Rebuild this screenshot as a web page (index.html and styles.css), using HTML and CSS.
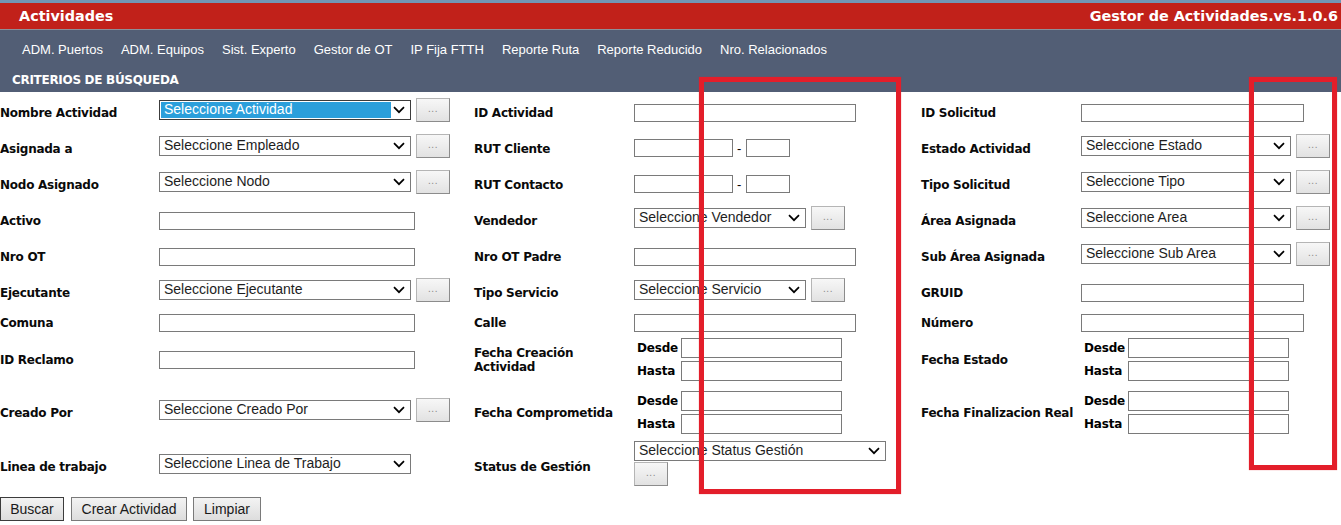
FILE: index.html
```html
<!DOCTYPE html>
<html lang="es">
<head>
<meta charset="utf-8">
<title>Actividades</title>
<link rel="stylesheet" href="styles.css">
</head>
<body>
<div class="topline"></div>
<header class="titlebar">
  <span class="title">Actividades</span>
  <span class="version">Gestor de Actividades.vs.1.0.6</span>
</header>
<div class="graybar">
  <nav class="menu">
    <a>ADM. Puertos</a>
    <a>ADM. Equipos</a>
    <a>Sist. Experto</a>
    <a>Gestor de OT</a>
    <a>IP Fija FTTH</a>
    <a>Reporte Ruta</a>
    <a>Reporte Reducido</a>
    <a>Nro. Relacionados</a>
  </nav>
  <div class="section">CRITERIOS DE BÚSQUEDA</div>
</div>

<form class="grid">
  <!-- row 1 -->
  <label class="lbl">Nombre Actividad</label>
  <div class="pick"><select class="sel w252 focused"><option>Seleccione Actividad</option></select><button type="button" class="dots">...</button></div>
  <label class="lbl">ID Actividad</label>
  <div><input class="txt w222" type="text"></div>
  <label class="lbl">ID Solicitud</label>
  <div><input class="txt w223" type="text"></div>

  <!-- row 2 -->
  <label class="lbl">Asignada a</label>
  <div class="pick"><select class="sel w252"><option>Seleccione Empleado</option></select><button type="button" class="dots">...</button></div>
  <label class="lbl">RUT Cliente</label>
  <div class="rut"><input class="txt w99" type="text"><span class="dash">-</span><input class="txt w44" type="text"></div>
  <label class="lbl">Estado Actividad</label>
  <div class="pick"><select class="sel w210"><option>Seleccione Estado</option></select><button type="button" class="dots">...</button></div>

  <!-- row 3 -->
  <label class="lbl">Nodo Asignado</label>
  <div class="pick"><select class="sel w252"><option>Seleccione Nodo</option></select><button type="button" class="dots">...</button></div>
  <label class="lbl">RUT Contacto</label>
  <div class="rut"><input class="txt w99" type="text"><span class="dash">-</span><input class="txt w44" type="text"></div>
  <label class="lbl">Tipo Solicitud</label>
  <div class="pick"><select class="sel w210"><option>Seleccione Tipo</option></select><button type="button" class="dots">...</button></div>

  <!-- row 4 -->
  <label class="lbl">Activo</label>
  <div><input class="txt w256" type="text"></div>
  <label class="lbl">Vendedor</label>
  <div class="pick"><select class="sel w172"><option>Seleccione Vendedor</option></select><button type="button" class="dots">...</button></div>
  <label class="lbl">Área Asignada</label>
  <div class="pick"><select class="sel w210"><option>Seleccione Area</option></select><button type="button" class="dots">...</button></div>

  <!-- row 5 -->
  <label class="lbl">Nro OT</label>
  <div><input class="txt w256" type="text"></div>
  <label class="lbl">Nro OT Padre</label>
  <div><input class="txt w222" type="text"></div>
  <label class="lbl">Sub Área Asignada</label>
  <div class="pick"><select class="sel w210"><option>Seleccione Sub Area</option></select><button type="button" class="dots">...</button></div>

  <!-- row 6 -->
  <label class="lbl">Ejecutante</label>
  <div class="pick"><select class="sel w252"><option>Seleccione Ejecutante</option></select><button type="button" class="dots">...</button></div>
  <label class="lbl">Tipo Servicio</label>
  <div class="pick"><select class="sel w172"><option>Seleccione Servicio</option></select><button type="button" class="dots">...</button></div>
  <label class="lbl">GRUID</label>
  <div><input class="txt w223" type="text"></div>

  <!-- row 7 -->
  <label class="lbl">Comuna</label>
  <div><input class="txt w256" type="text"></div>
  <label class="lbl">Calle</label>
  <div><input class="txt w222" type="text"></div>
  <label class="lbl">Número</label>
  <div><input class="txt w223" type="text"></div>

  <!-- row 8 -->
  <label class="lbl">ID Reclamo</label>
  <div><input class="txt w256" type="text"></div>
  <label class="lbl">Fecha Creación<br>Actividad</label>
  <div class="range">
    <span class="rlbl">Desde</span><input class="txt dt" type="text">
    <span class="rlbl">Hasta</span><input class="txt dt" type="text">
  </div>
  <label class="lbl">Fecha Estado</label>
  <div class="range">
    <span class="rlbl">Desde</span><input class="txt dt" type="text">
    <span class="rlbl">Hasta</span><input class="txt dt" type="text">
  </div>

  <!-- row 9 -->
  <label class="lbl">Creado Por</label>
  <div class="pick"><select class="sel w252"><option>Seleccione Creado Por</option></select><button type="button" class="dots">...</button></div>
  <label class="lbl">Fecha Comprometida</label>
  <div class="range">
    <span class="rlbl">Desde</span><input class="txt dt" type="text">
    <span class="rlbl">Hasta</span><input class="txt dt" type="text">
  </div>
  <label class="lbl">Fecha Finalizacion Real</label>
  <div class="range">
    <span class="rlbl">Desde</span><input class="txt dt" type="text">
    <span class="rlbl">Hasta</span><input class="txt dt" type="text">
  </div>

  <!-- row 10 -->
  <label class="lbl">Linea de trabajo</label>
  <div class="pick"><select class="sel w252"><option>Seleccione Linea de Trabajo</option></select></div>
  <label class="lbl">Status de Gestión</label>
  <div class="stack"><select class="sel w252"><option>Seleccione Status Gestión</option></select><button type="button" class="dots">...</button></div>
  <div></div>
  <div></div>
</form>

<div class="actions">
  <button type="button" class="btn btn-main">Buscar</button>
  <button type="button" class="btn btn-create">Crear Actividad</button>
  <button type="button" class="btn btn-clear">Limpiar</button>
</div>

<div class="mark mark-a"></div>
<div class="mark mark-b"></div>
</body>
</html>
```

FILE: styles.css
```css
html, body {
  margin: 0;
  padding: 0;
  background: #ffffff;
}

body {
  position: relative;
  width: 1341px;
  height: 525px;
  overflow: hidden;
  font-family: "DejaVu Sans", Verdana, sans-serif;
  color: #000;
}

.topline {
  height: 3px;
  background: #7196b5;
}

.titlebar {
  height: 26px;
  background: #c1211a;
  border-bottom: 1px solid #8d8f98;
  display: flex;
  align-items: center;
  justify-content: space-between;
  padding: 0 3px 0 19px;
  color: #fff;
  font-family: "DejaVu Sans", Verdana, sans-serif;
  font-weight: bold;
  font-size: 14.4px;
}

.graybar {
  background: #525e75;
  height: 62px;
}

.menu {
  height: 37px;
  display: flex;
  align-items: center;
  padding-left: 13px;
}

.menu a {
  color: #fff;
  font-family: "Liberation Sans", Arial, sans-serif;
  font-size: 13px;
  padding: 1px 9px 0;
}

.section {
  height: 25px;
  display: flex;
  align-items: center;
  padding-left: 12px;
  color: #fff;
  font-weight: bold;
  font-size: 12px;
  letter-spacing: -0.3px;
}

.grid {
  margin: 0;
  padding-top: 2px;
  display: grid;
  grid-template-columns: 159px 315px 160px 287px 160px 1fr;
  grid-template-rows: 36px 36px 36px 36px 36px 36px 24px 50px 56px 52px;
  align-items: center;
}

.lbl {
  font-weight: bold;
  font-size: 12px;
  line-height: 14px;
  letter-spacing: -0.25px;
  padding-top: 2px;
  color: #0a0a0a;
}

.pick {
  display: flex;
  align-items: center;
  gap: 5px;
  margin-bottom: 5px;
}

.rut {
  display: flex;
  align-items: center;
}

.dash {
  font-family: "Liberation Sans", Arial, sans-serif;
  font-size: 13px;
  margin: 0 5px 0 4px;
}

.stack {
  display: flex;
  flex-direction: column;
  align-items: flex-start;
  gap: 1px;
  margin-bottom: 5px;
}

.range {
  display: grid;
  grid-template-columns: 47px 161px;
  row-gap: 3px;
  align-items: center;
}

.rlbl {
  font-weight: bold;
  font-size: 12px;
  letter-spacing: -0.2px;
  padding-left: 3px;
}

.txt {
  box-sizing: border-box;
  height: 18px;
  border: 1px solid #7a7a7a;
  padding: 0 3px;
  margin: 0;
  background: #fff;
  font-family: "Liberation Sans", Arial, sans-serif;
  font-size: 13px;
}

.txt.dt {
  height: 20px;
  width: 161px;
}

.w256 { width: 256px; }
.w252 { width: 252px; }
.w223 { width: 223px; }
.w222 { width: 222px; }
.w210 { width: 210px; }
.w172 { width: 172px; }
.w99 { width: 99px; }
.w44 { width: 44px; }

.sel {
  box-sizing: border-box;
  height: 20px;
  margin: 0;
  border: 1px solid #7a7a7a;
  border-radius: 0;
  padding: 0 20px 2px 4px;
  -webkit-appearance: none;
  appearance: none;
  font-family: "Liberation Sans", Arial, sans-serif;
  font-size: 14px;
  line-height: 16px;
  color: #1e1e1e;
  background: #fff url("data:image/svg+xml,%3Csvg xmlns='http://www.w3.org/2000/svg' width='12' height='8' viewBox='0 0 12 8'%3E%3Cpath d='M1 1.2l5 5 5-5' fill='none' stroke='%23000' stroke-width='1.7'/%3E%3C/svg%3E") no-repeat right 5px center;
}

.sel.focused {
  border-color: #3c3c3c;
  color: #fff;
  background:
    url("data:image/svg+xml,%3Csvg xmlns='http://www.w3.org/2000/svg' width='12' height='8' viewBox='0 0 12 8'%3E%3Cpath d='M1 1.2l5 5 5-5' fill='none' stroke='%23000' stroke-width='1.7'/%3E%3C/svg%3E") no-repeat right 5px center,
    linear-gradient(#2b9fdb, #2b9fdb) no-repeat 1px 1px / calc(100% - 20px) calc(100% - 2px),
    #fff;
}

.dots {
  box-sizing: border-box;
  width: 34px;
  height: 24px;
  margin: 0;
  padding: 0 0 3px;
  border: 1px solid #b5b5b5;
  border-right-color: #8c8c8c;
  border-bottom-color: #8c8c8c;
  border-radius: 0;
  background: linear-gradient(#f7f7f7, #e2e2e2);
  font-family: "Liberation Sans", Arial, sans-serif;
  font-size: 10px;
  color: #8a8a8a;
  letter-spacing: 0.5px;
}

.actions {
  display: flex;
  gap: 6px;
  margin-top: 5px;
}

.btn {
  box-sizing: border-box;
  height: 24px;
  margin: 0;
  padding: 0 0 1px;
  border: 1px solid #7a7a7a;
  border-radius: 0;
  background: linear-gradient(#f3f3f3, #dddddd);
  font-family: "Liberation Sans", Arial, sans-serif;
  font-size: 14px;
  color: #1a1a1a;
}

.btn-main {
  width: 64px;
  border-color: #3c3c3c;
  margin-right: 1px;
}

.btn-create { width: 116px; }
.btn-clear { width: 68px; }

/* red annotation frames drawn over the form */
.mark {
  position: absolute;
  box-sizing: border-box;
  border: 5px solid #e31e2a;
  box-shadow: 0 0 1px rgba(227, 30, 42, 0.6);
  pointer-events: none;
}

.mark-a {
  left: 699px;
  top: 77px;
  width: 202px;
  height: 417px;
}

.mark-b {
  left: 1249px;
  top: 77px;
  width: 88px;
  height: 393px;
}
```
